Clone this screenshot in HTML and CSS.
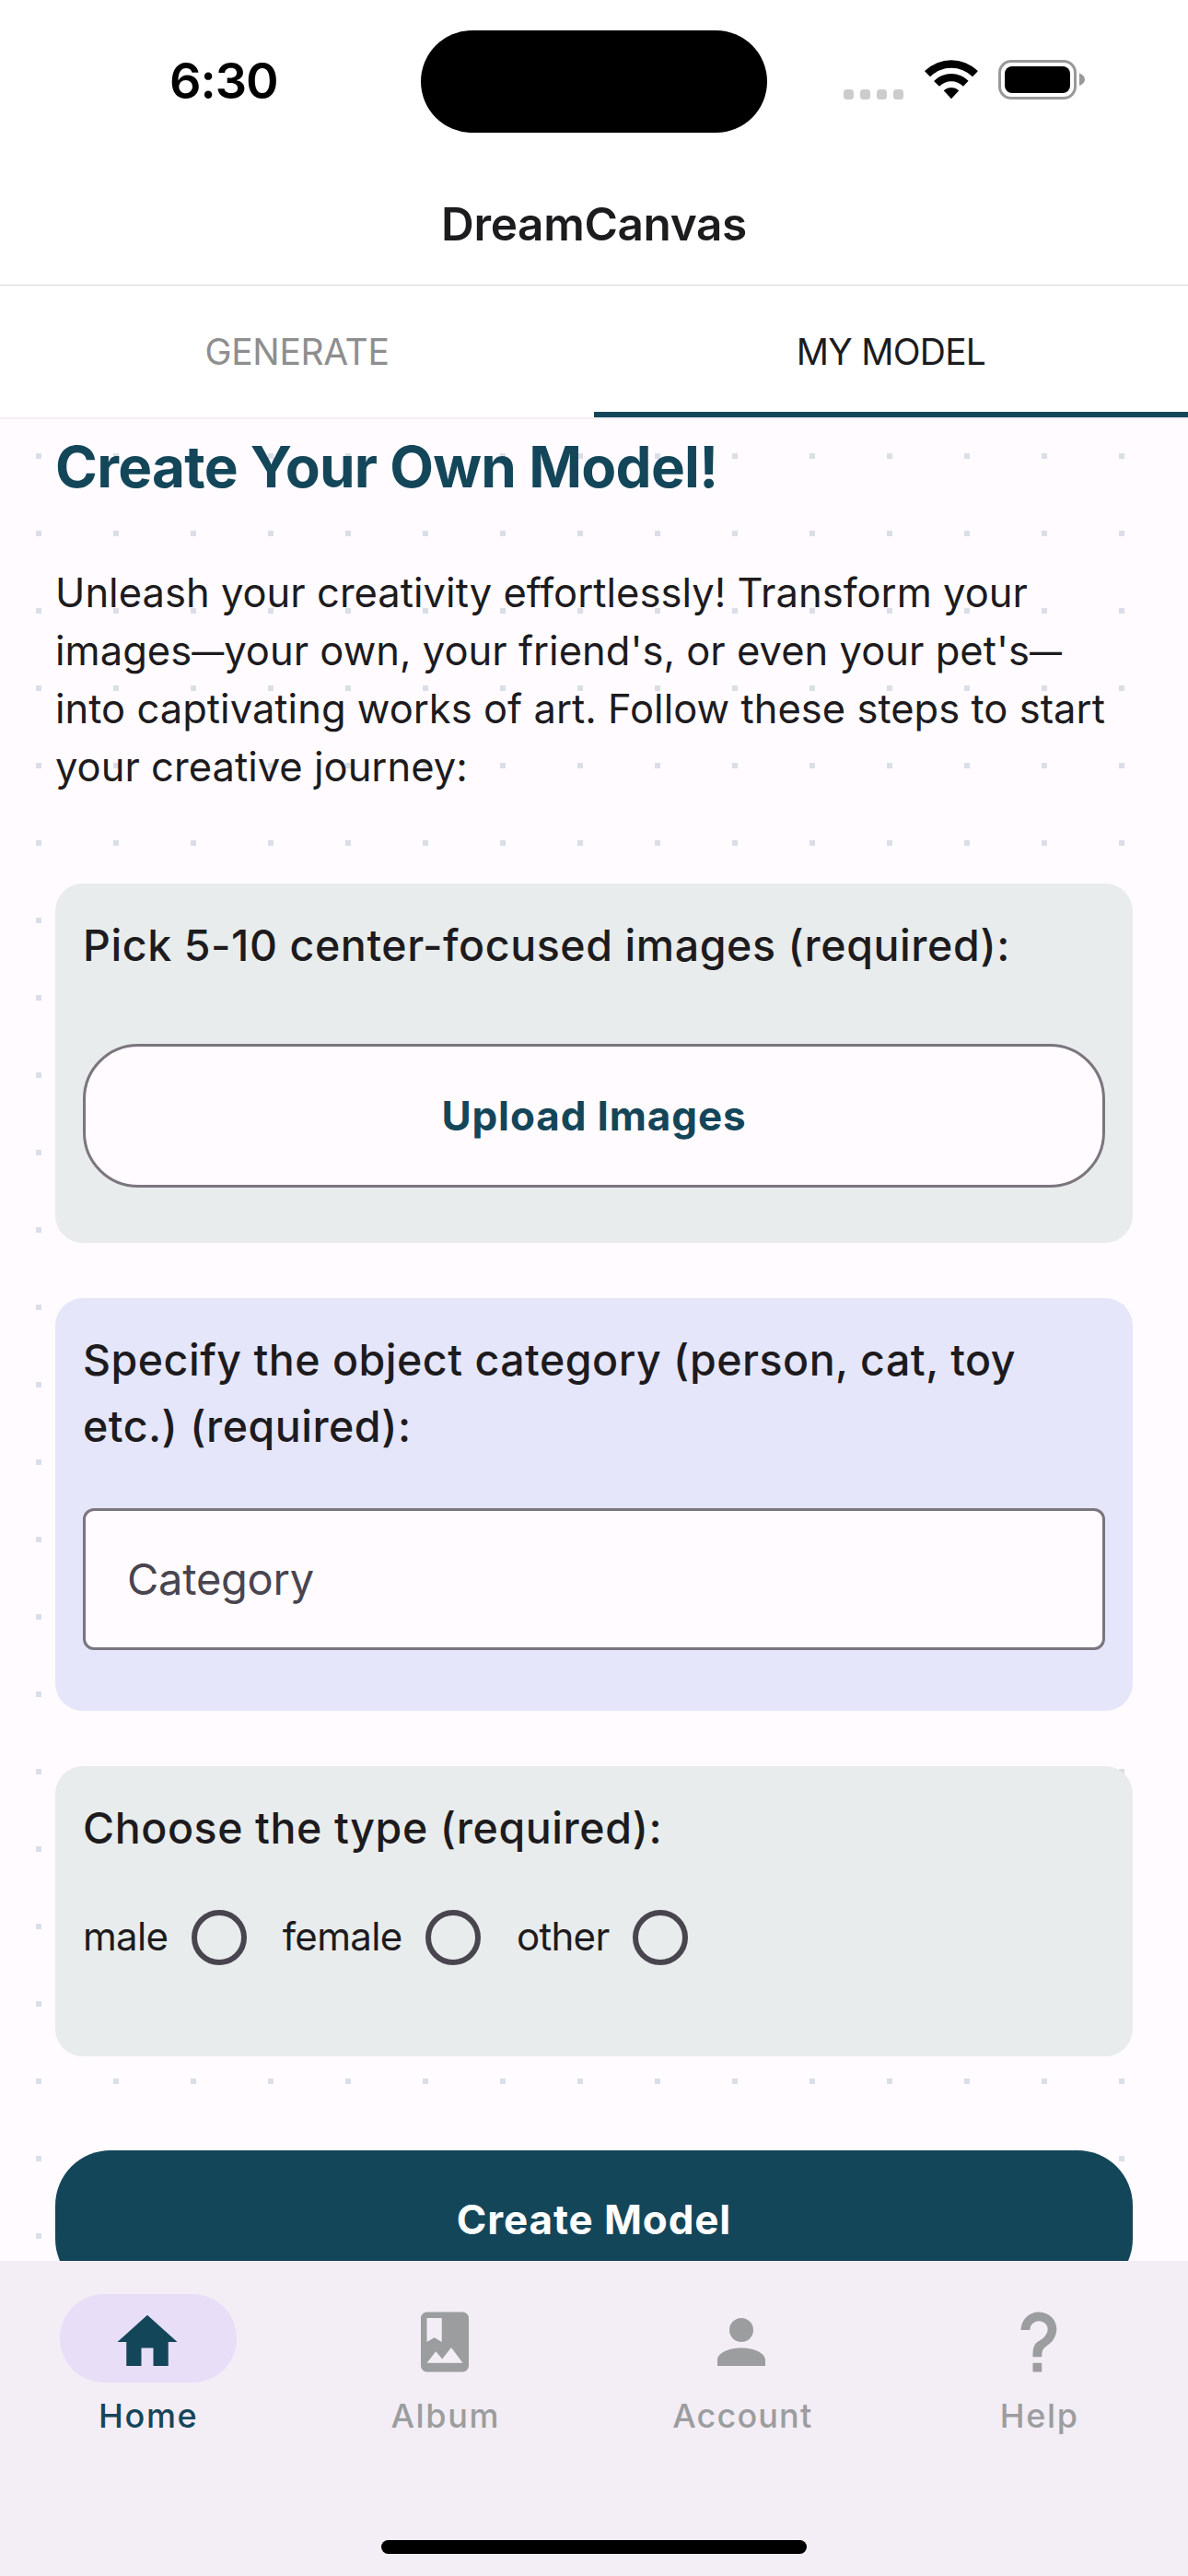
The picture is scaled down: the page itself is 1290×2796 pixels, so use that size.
FILE: index.html
```html
<!DOCTYPE html>
<html lang="en">
<head>
  <meta charset="utf-8">
  <title>DreamCanvas</title>
  <link rel="stylesheet" href="styles.css">
</head>
<body>
  <div class="app">
    <header class="header">
      <div class="status">
        <div class="status-time">6:30</div>
        <div class="island"></div>
        <div class="status-icons">
          <div class="signal"><i></i><i></i><i></i><i></i></div>
          <svg class="wifi" width="58" height="43" viewBox="0 0 58 43">
            <path d="M0 12.6Q.2 12.1.7 11.6A41 41 0 0 1 57.3 11.6Q57.8 12.1 57.4 12.8L52 18.2A33 33 0 0 0 6 18.2L.6 12.8Z"/>
            <path d="M10.4 22.7A26.5 26.5 0 0 1 47.6 22.7L42 28.7A18.5 18.5 0 0 0 16 28.7L10.4 23.4Z"/>
            <path d="M20.7 33.2A12.6 12.6 0 0 1 37.3 33.2L29 42.2Z"/>
          </svg>
          <svg class="battery" width="94" height="43" viewBox="0 0 94 43">
            <rect x="1.5" y="1.5" width="82" height="40" rx="12.5" fill="none" stroke="#999" stroke-width="3"/>
            <rect x="7" y="7" width="71" height="29" rx="8"/>
            <path d="M88 14.5Q94 17 94 21.2T88 28Z" fill="#999"/>
          </svg>
        </div>
      </div>
      <h1 class="app-title">DreamCanvas</h1>
    </header>

    <nav class="tabs">
      <a class="tab">GENERATE</a>
      <a class="tab tab-active">MY MODEL</a>
    </nav>

    <main class="content">
      <h2 class="title">Create Your Own Model!</h2>
      <p class="intro">Unleash your creativity effortlessly! Transform your<br>images<span class="dash">—</span>your own, your friend's, or even your pet's<span class="dash">—</span><br>into captivating works of art. Follow these steps to start<br>your creative journey:</p>

      <section class="card card-upload">
        <h3 class="card-title">Pick 5-10 center-focused images (required):</h3>
        <div class="button button-outlined">Upload Images</div>
      </section>

      <section class="card card-category">
        <h3 class="card-title card-title-tight">Specify the object category (person, cat, toy<br>etc.) (required):</h3>
        <div class="field">Category</div>
      </section>

      <section class="card card-type">
        <h3 class="card-title">Choose the type (required):</h3>
        <div class="radios">
          <div class="option"><span>male</span><i class="radio"></i></div>
          <div class="option"><span>female</span><i class="radio"></i></div>
          <div class="option"><span>other</span><i class="radio"></i></div>
        </div>
      </section>

      <div class="button button-filled">Create Model</div>
    </main>

    <footer class="bottom">
      <div class="bottom-items">
        <a class="item item-active">
          <span class="pill"><svg class="icon" viewBox="0 0 24 24"><path d="M10,20V14H14V20H19V12H22L12,3L2,12H5V20H10Z"/></svg></span>
          <span class="item-label">Home</span>
        </a>
        <a class="item">
          <span class="pill"><svg class="icon" viewBox="0 0 24 24"><path d="M6,19L9,15.14L11.14,17.72L14.14,13.86L18,19H6M6,4H11V12L8.5,10.5L6,12M18,2H6A2,2 0 0,0 4,4V20A2,2 0 0,0 6,22H18A2,2 0 0,0 20,20V4A2,2 0 0,0 18,2Z"/></svg></span>
          <span class="item-label">Album</span>
        </a>
        <a class="item">
          <span class="pill"><svg class="icon" viewBox="0 0 24 24"><path d="M12,4A4,4 0 0,1 16,8A4,4 0 0,1 12,12A4,4 0 0,1 8,8A4,4 0 0,1 12,4M12,14C16.42,14 20,15.79 20,18V20H4V18C4,15.79 7.58,14 12,14Z"/></svg></span>
          <span class="item-label item-label-long">Account</span>
        </a>
        <a class="item">
          <span class="pill"><svg class="icon" viewBox="0 0 24 24"><path d="M10,19H13V22H10V19M12,2C17.35,2.22 19.68,7.62 16.5,11.67C15.67,12.67 14.33,13.33 13.67,14.17C13,15 13,16 13,17H10C10,15.33 10,13.92 10.67,12.92C11.33,11.92 12.67,11.33 13.5,10.67C15.92,8.43 15.32,5.26 12,5A3,3 0 0,0 9,8H6A6,6 0 0,1 12,2Z"/></svg></span>
          <span class="item-label">Help</span>
        </a>
      </div>
      <div class="home-bar"></div>
    </footer>
  </div>
</body>
</html>
```
FILE: styles.css
```css
* {
  box-sizing: border-box;
}

body {
  margin: 0;
  background: #fff;
  color: #1d1b1e;
  font-family: Inter, "Liberation Sans", sans-serif;
}

h1, h2, h3, p {
  margin: 0;
}

.app {
  display: flex;
  flex-direction: column;
  width: 1290px;
  height: 2796px;
  overflow: hidden;
}

/* Status bar and title */
.header {
  height: 310px;
  border-bottom: 1px solid #d8d8d8;
}

.status {
  display: grid;
  grid-template-columns: 457px 376px 457px;
  align-items: center;
  height: 177px;
}

.status-time {
  margin-top: -2px;
  padding-left: 184px;
  color: #000;
  font-size: 54px;
  font-weight: 600;
  line-height: 64px;
  letter-spacing: -1px;
}

.island {
  height: 111px;
  border-radius: 56px;
  background: #000;
}

.status-icons {
  display: flex;
  align-items: flex-end;
  height: 43px;
  margin-top: -4px;
  padding-left: 83px;
}

.signal {
  display: flex;
  gap: 7px;
  width: 88px;
}

.signal i {
  width: 11px;
  height: 11px;
  border-radius: 3.5px;
  background: #ccc;
}

.wifi {
  margin-right: 22px;
}

.app-title {
  color: #1c1c1e;
  font-size: 49.5px;
  font-weight: 600;
  line-height: 132px;
  letter-spacing: -0.35px;
  text-align: center;
}

/* Tabs */
.tabs {
  display: flex;
  height: 143px;
}

.tab {
  flex: 1;
  border-bottom: 6px solid transparent;
  color: #8e8e8f;
  font-size: 39px;
  line-height: 143px;
  letter-spacing: -0.32px;
  text-align: center;
}

.tab-active {
  border-bottom-color: #14465a;
  color: #1c1c1e;
  letter-spacing: -0.76px;
}

/* Scrolling content on a dotted background */
.content {
  height: 2001px;
  padding: 10px 60px 0;
  border-top: 2px solid #f3eef3;
  overflow: hidden;
  background-color: #fffbff;
  background-image: conic-gradient(from 270deg at 6px 6px, #dadee7 90deg, transparent 0);
  background-position: 39px 37px;
  background-size: 84px 84px;
}

.title {
  color: #14465a;
  font-size: 62px;
  font-weight: 700;
  line-height: 84px;
  letter-spacing: -0.72px;
}

.intro {
  margin-top: 63px;
  font-size: 43.5px;
  line-height: 63px;
  letter-spacing: 0.02px;
  white-space: nowrap;
}

.dash {
  font-size: 35px;
  font-weight: 500;
  line-height: 0;
  vertical-align: 2px;
}

.card {
  margin-bottom: 60px;
  padding: 31px 30px 0;
  border-radius: 30px;
  background: #e8ecec;
}

.card-upload {
  height: 390px;
  margin-top: 95px;
}

.card-category {
  height: 448px;
  background: #e5e6fa;
}

.card-type {
  height: 315px;
  margin-bottom: 102px;
}

.card-title {
  font-size: 46.5px;
  font-weight: 500;
  line-height: 72px;
  letter-spacing: 0.58px;
  white-space: nowrap;
}

.card-title-tight {
  letter-spacing: 0.5px;
}

.button {
  height: 156px;
  border-radius: 60px;
  font-size: 44px;
  font-weight: 700;
  letter-spacing: 0.88px;
  text-align: center;
}

.button-outlined {
  margin-top: 71px;
  border: 3px solid #7b757f;
  background: #fffbff;
  color: #14465a;
  line-height: 150px;
}

.button-filled {
  background: #14465a;
  color: #fff;
  line-height: 151px;
}

.field {
  height: 154px;
  margin-top: 53px;
  padding-left: 45px;
  border: 3px solid #7b757f;
  border-radius: 12px;
  background: #fffbff;
  color: #49454f;
  font-size: 47px;
  line-height: 147px;
  letter-spacing: -0.25px;
}

.radios {
  display: flex;
  gap: 39px;
  margin-top: 53px;
}

.option {
  display: flex;
  gap: 25.4px;
  font-size: 42px;
  line-height: 58px;
  letter-spacing: -0.68px;
}

.radio {
  width: 60px;
  height: 60px;
  border: 6px solid #49454f;
  border-radius: 50%;
}

/* Bottom navigation */
.bottom {
  height: 342px;
  padding-top: 36px;
  background: #f3edf5;
}

.bottom-items {
  display: flex;
}

.item {
  display: flex;
  flex: 1;
  flex-direction: column;
  align-items: center;
  color: #9b9d9f;
}

.item-active {
  color: #14465a;
}

.pill {
  display: flex;
  justify-content: center;
  width: 192px;
  height: 96px;
  padding: 13px 2px 0 0;
  border-radius: 48px;
}

.item-active .pill {
  background: #e8def8;
}

.icon {
  width: 78px;
  height: 78px;
  fill: currentColor;
}

.item-label {
  margin-top: 12px;
  font-size: 36px;
  font-weight: 500;
  line-height: 48px;
  letter-spacing: 1.65px;
}

.item-label-long {
  letter-spacing: 1.15px;
}

.home-bar {
  width: 462px;
  height: 15px;
  margin: 111px auto 0;
  border-radius: 8px;
  background: #000;
}
```
